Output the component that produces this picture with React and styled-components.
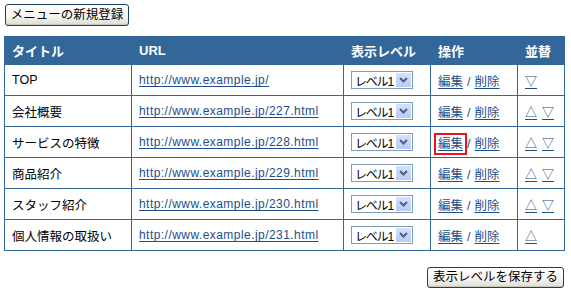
import React from "react";
import styled, { createGlobalStyle } from "styled-components";

const Global = createGlobalStyle`
  html, body { margin: 0; padding: 0; background: #fff; }
  body {
    font-family: "Liberation Sans", "Noto Sans CJK JP", sans-serif;
    font-size: 12px;
    color: #000;
  }
`;

const Page = styled.div`
  width: 571px;
  padding: 4px 7px 0 4px;
  box-sizing: border-box;
  display: flex;
  flex-direction: column;
`;

const Button = styled.button`
  font-family: "Liberation Sans", "Noto Sans CJK JP", sans-serif;
  font-size: 12.5px;
  color: #000;
  height: ${(p) => p.$h}px;
  width: ${(p) => p.$w}px;
  padding: 0;
  white-space: nowrap;
  border: 1px solid #1c3f66;
  border-radius: 3px;
  background: linear-gradient(#ffffff 0%, #f4f4f0 60%, #dcdcd4 100%);
  box-shadow: inset 0 -1px 0 #c8c8c0;
  cursor: pointer;
  line-height: 1;
`;

const TopBar = styled.div`
  display: flex;
  padding-left: 1px;
  margin-bottom: 10px;
`;

const BottomBar = styled.div`
  display: flex;
  justify-content: flex-end;
  margin-top: 16px;
`;

const Table = styled.table`
  border-collapse: collapse;
  width: 560px;
  table-layout: fixed;
  border: 1px solid #336699;
`;

const Th = styled.th`
  background: #336699;
  color: #fff;
  font-weight: bold;
  text-align: left;
  height: 27px;
  padding: 0 7px;
  font-size: 13px;
  border-left: 1px solid #336699;
`;

const Td = styled.td`
  height: 30px;
  padding: 0 7px;
  border: 1px solid #336699;
  font-size: 12.5px;
  white-space: nowrap;
`;

const Link = styled.a`
  color: #1d4e89;
  text-decoration: underline;
  text-underline-offset: 2px;
  font-size: ${(p) => (p.$url ? "12px" : "12.5px")};
  letter-spacing: ${(p) => (p.$url ? "0.45px" : "0")};
  ${(p) =>
    p.$marked &&
    `
    outline: 2px solid #e8161b;
    outline-offset: 2px;
  `}
`;

const Sep = styled.span`
  color: #1d4e89;
  margin: 0 4px;
`;

const Arrow = styled.a`
  color: #1d4e89;
  text-decoration: underline;
  text-underline-offset: 2px;
  font-size: 12px;
  margin-right: 5px;
`;

const Select = styled.div`
  display: flex;
  align-items: center;
  justify-content: space-between;
  width: 62px;
  height: 18px;
  box-sizing: border-box;
  border: 1px solid #7f9db9;
  background: #fff;
  padding: 0 1px 0 3px;
`;

const SelectText = styled.span`
  font-size: 12px;
  letter-spacing: -1.2px;
  white-space: nowrap;
`;

const SelectArrow = styled.span`
  flex: none;
  width: 15px;
  height: 14px;
  background: linear-gradient(#d6e2fb, #b6cbf6);
  display: flex;
  align-items: center;
  justify-content: center;
`;

const rows = [
  { title: "TOP", url: "http://www.example.jp/", up: false, down: true },
  { title: "会社概要", url: "http://www.example.jp/227.html", up: true, down: true },
  { title: "サービスの特徴", url: "http://www.example.jp/228.html", up: true, down: true, marked: true },
  { title: "商品紹介", url: "http://www.example.jp/229.html", up: true, down: true },
  { title: "スタッフ紹介", url: "http://www.example.jp/230.html", up: true, down: true },
  { title: "個人情報の取扱い", url: "http://www.example.jp/231.html", up: true, down: false },
];

function LevelSelect() {
  return (
    <Select>
      <SelectText>レベル1</SelectText>
      <SelectArrow>
        <svg width="9" height="6" viewBox="0 0 9 6">
          <path d="M1 1 L4.5 4.5 L8 1" fill="none" stroke="#4d6185" strokeWidth="2" />
        </svg>
      </SelectArrow>
    </Select>
  );
}

export default function App() {
  return (
    <>
      <Global />
      <Page>
        <TopBar>
          <Button $w={124} $h={22}>メニューの新規登録</Button>
        </TopBar>
        <Table>
          <colgroup>
            <col style={{ width: 127 }} />
            <col style={{ width: 212 }} />
            <col style={{ width: 87 }} />
            <col style={{ width: 87 }} />
            <col style={{ width: 47 }} />
          </colgroup>
          <thead>
            <tr>
              <Th>タイトル</Th>
              <Th>URL</Th>
              <Th>表示レベル</Th>
              <Th>操作</Th>
              <Th>並替</Th>
            </tr>
          </thead>
          <tbody>
            {rows.map((r) => (
              <tr key={r.title}>
                <Td>{r.title}</Td>
                <Td>
                  <Link href="#" $url>{r.url}</Link>
                </Td>
                <Td>
                  <LevelSelect />
                </Td>
                <Td>
                  <Link href="#" $marked={r.marked}>編集</Link>
                  <Sep>/</Sep>
                  <Link href="#">削除</Link>
                </Td>
                <Td>
                  {r.up && <Arrow href="#">△</Arrow>}
                  {r.down && <Arrow href="#">▽</Arrow>}
                </Td>
              </tr>
            ))}
          </tbody>
        </Table>
        <BottomBar>
          <Button $w={137} $h={21}>表示レベルを保存する</Button>
        </BottomBar>
      </Page>
    </>
  );
}
